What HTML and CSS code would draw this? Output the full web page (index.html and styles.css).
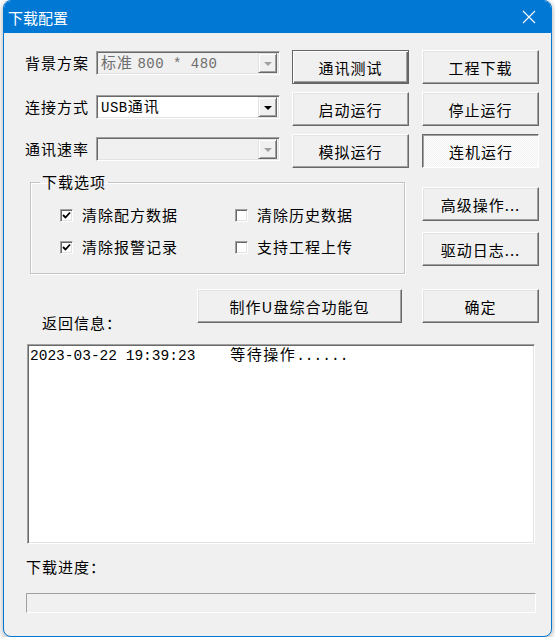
FILE: index.html
```html
<!DOCTYPE html>
<html lang="zh-CN">
<head>
    <meta charset="UTF-8">
    <title>下载配置</title>
    <link rel="stylesheet" href="styles.css">
</head>
<body>
<div class="window">
    <div class="titlebar">
        <span class="title">下载配置</span>
        <svg class="close" width="14" height="14" viewBox="0 0 14 14">
            <path d="M1 1 L13 13 M13 1 L1 13" stroke="#fff" stroke-width="1.1" fill="none"/>
        </svg>
    </div>
    <div class="client">
        <div class="grid-top">
            <div class="field first">
                <span class="label">背景方案</span>
                <div class="combo disabled"><span class="value">标准 <span class="mono">800 * 480</span></span><span class="drop"><i></i></span></div>
            </div>
            <button class="btn default">通讯测试</button>
            <button class="btn">工程下载</button>

            <div class="field">
                <span class="label">连接方式</span>
                <div class="combo"><span class="value"><span class="mono">USB</span>通讯</span><span class="drop"><i></i></span></div>
            </div>
            <button class="btn">启动运行</button>
            <button class="btn">停止运行</button>

            <div class="field">
                <span class="label">通讯速率</span>
                <div class="combo disabled"><span class="value"></span><span class="drop"><i></i></span></div>
            </div>
            <button class="btn">模拟运行</button>
            <button class="btn pressed">连机运行</button>
        </div>

        <div class="row-options">
            <div class="opts-wrap">
                <fieldset class="group">
                    <legend>下载选项</legend>
                    <div class="checks">
                        <label class="check"><span class="box on"><svg width="9" height="9" viewBox="0 0 9 9"><path d="M1 4 L3.5 6.5 L8 1.5" stroke="#000" stroke-width="1.8" fill="none"/></svg></span>清除配方数据</label>
                        <label class="check"><span class="box"></span>清除历史数据</label>
                        <label class="check"><span class="box on"><svg width="9" height="9" viewBox="0 0 9 9"><path d="M1 4 L3.5 6.5 L8 1.5" stroke="#000" stroke-width="1.8" fill="none"/></svg></span>清除报警记录</label>
                        <label class="check"><span class="box"></span>支持工程上传</label>
                    </div>
                </fieldset>
            </div>
            <div class="side">
                <button class="btn">高级操作...</button>
                <button class="btn">驱动日志...</button>
            </div>
        </div>

        <div class="row-actions">
            <span class="info-label">返回信息：</span>
            <button class="btn wide">制作U盘综合功能包</button>
            <button class="btn ok">确定</button>
        </div>

        <div class="log"><span class="mono">2023-03-22 19:39:23    </span><span class="cjk">等待操作</span><span class="mono">......</span></div>

        <div class="progress-label">下载进度：</div>
        <div class="progress"></div>
    </div>
</div>
</body>
</html>
```

FILE: styles.css
```css
* {
    margin: 0;
    padding: 0;
    box-sizing: border-box;
}

body {
    background: #fff;
    font-family: "Noto Sans CJK SC", sans-serif;
    font-size: 15px;
    letter-spacing: 1px;
    color: #000;
}

.window {
    margin-left: 3px;
    width: 549px;
    height: 637px;
    border: 1px solid #0078d4;
    border-radius: 8px;
    background: #f0f0f0;
    overflow: hidden;
    box-shadow: 0 2px 6px rgba(0, 0, 0, .35);
}

.titlebar {
    height: 32px;
    background: #0078d4;
    color: #fff;
    display: flex;
    align-items: center;
    justify-content: space-between;
    padding: 0 15px 0 4px;
}
.title {
    font-size: 15px;
    letter-spacing: 0;
}

.client {
    padding: 17px 0 0 21px;
}

.grid-top {
    display: grid;
    grid-template-columns: 255px 118px 117px;
    grid-auto-rows: 34px;
    column-gap: 12px;
    row-gap: 8px;
}

.field {
    display: flex;
    align-items: center;
    height: 24px;
    margin-top: 3px;
}
.field.first {
    margin-top: 1px;
}
.label {
    width: 71px;
    line-height: 18px;
}

.combo {
    width: 184px;
    height: 24px;
    display: flex;
    align-items: center;
    justify-content: space-between;
    background: #fff;
    border: 1px solid;
    border-color: #a0a0a0 #fff #fff #a0a0a0;
    box-shadow: inset 1px 1px #696969, inset -1px -1px #e3e3e3;
    padding: 2px 2px 2px 4px;
}
.combo.disabled {
    background: #f0f0f0;
    color: #6d6d6d;
}
.combo .value {
    line-height: 18px;
    white-space: pre;
}
.drop {
    width: 19px;
    height: 20px;
    background: #f0f0f0;
    border: 1px solid;
    border-color: #e3e3e3 #696969 #696969 #e3e3e3;
    box-shadow: inset 1px 1px #fff, inset -1px -1px #a0a0a0;
    display: flex;
    align-items: center;
    justify-content: center;
}
.drop i {
    width: 0;
    height: 0;
    border-left: 4px solid transparent;
    border-right: 4px solid transparent;
    border-top: 4px solid #000;
    margin-top: 1px;
}
.combo.disabled .drop i {
    border-top-color: #a0a0a0;
}

.mono {
    font-family: "Liberation Mono", monospace;
    font-size: 14px;
    letter-spacing: 0.5px;
}

.btn {
    width: 117px;
    height: 34px;
    font-family: inherit;
    font-size: 15px;
    letter-spacing: 1px;
    color: #000;
    background: #f0f0f0;
    border: 1px solid;
    border-color: #fff #696969 #696969 #fff;
    box-shadow: inset -1px -1px #a0a0a0, inset 1px 1px #e3e3e3;
    outline: none;
}
.btn.default {
    border-color: #646464;
    box-shadow: inset 1px 1px #fff, inset -1px -1px #696969, inset -2px -2px #a0a0a0;
}
.btn.pressed {
    border-color: #696969 #fff #fff #696969;
    box-shadow: inset 1px 1px #a0a0a0;
    background: repeating-conic-gradient(#fff 0 25%, #f0f0f0 0 50%) 0 0 / 2px 2px;
    padding-top: 1px;
    padding-left: 1px;
}

.row-options {
    display: flex;
    margin-top: 5px;
}
.opts-wrap {
    width: 384px;
    padding-left: 5px;
}
.group {
    width: 375px;
    height: 101px;
    border: 1px solid #c4c4c4;
    box-shadow: inset 1px 1px #fff, 1px 1px #fff;
    padding: 0 0 0 29px;
}
.group legend {
    margin-left: -20px;
    padding: 0 2px;
    line-height: 18px;
}
.checks {
    display: grid;
    grid-template-columns: 175px 150px;
    row-gap: 14px;
    margin-top: 15px;
}
.check {
    display: flex;
    align-items: center;
    line-height: 18px;
}
.box {
    width: 13px;
    height: 13px;
    margin-right: 9px;
    background: #fff;
    border: 1px solid;
    border-color: #a0a0a0 #fff #fff #a0a0a0;
    box-shadow: inset 1px 1px #696969, inset -1px -1px #e3e3e3;
    display: flex;
    align-items: center;
    justify-content: center;
}

.side {
    display: flex;
    flex-direction: column;
    gap: 11px;
    margin-left: 13px;
    padding-top: 14px;
}

.row-actions {
    display: flex;
    align-items: flex-start;
    margin-top: 15px;
}
.info-label {
    width: 155px;
    margin-left: 17px;
    margin-top: 25px;
    line-height: 18px;
}
.btn.wide {
    width: 205px;
}
.btn.ok {
    margin-left: 20px;
}

.log {
    margin: 12px 0 0 2px;
    width: 508px;
    height: 200px;
    background: #fff;
    border: 1px solid;
    border-color: #a0a0a0 #fff #fff #a0a0a0;
    box-shadow: inset 1px 1px #696969, inset -1px -1px #e3e3e3;
    padding: 0 0 0 2px;
    line-height: 18px;
    white-space: pre;
}
.log .mono {
    font-size: 14.5px;
    letter-spacing: 0;
}
.log .cjk {
    letter-spacing: 1.5px;
}

.progress-label {
    margin: 14px 0 0 1px;
    line-height: 18px;
}
.progress {
    margin: 17px 0 0 1px;
    width: 510px;
    height: 20px;
    border: 1px solid;
    border-color: #a0a0a0 #fff #fff #a0a0a0;
    background: #f0f0f0;
}
```
